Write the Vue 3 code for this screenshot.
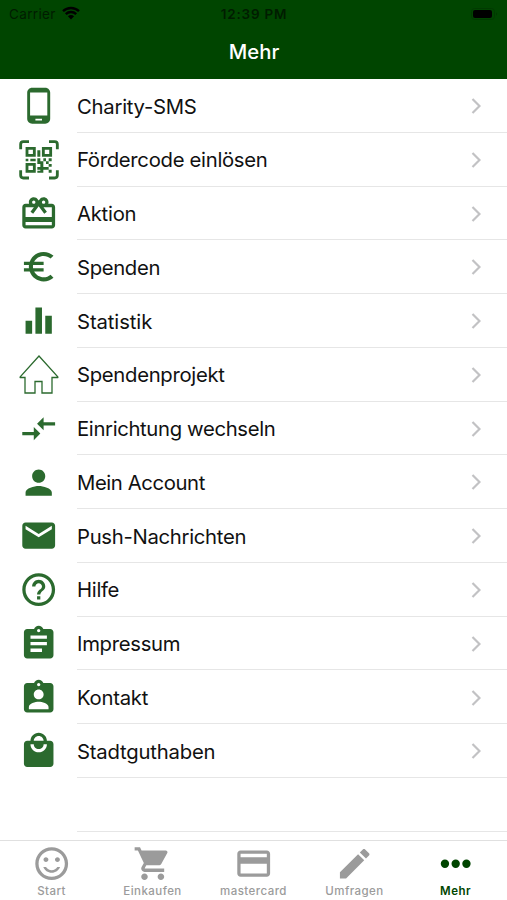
<template>
  <div class="more-screen">
    <!-- Status bar and title -->
    <header class="top-bar">
      <div class="status-bar">
        <div class="carrier">
          <span>Carrier</span>
          <svg class="wifi" viewBox="0 0 18 14">
            <path d="M1 5.2a11.5 11.5 0 0 1 16 0M3.8 8.2a7.4 7.4 0 0 1 10.4 0" />
            <path class="wifi-dot" d="M5.9 10.3a4.6 4.6 0 0 1 6.2 0L9 13.6z" />
          </svg>
        </div>
        <span class="clock">12:39 PM</span>
        <div class="battery-slot">
          <svg class="battery" viewBox="0 0 28 12">
            <rect class="battery-case" x=".5" y=".5" width="23" height="11" rx="3" />
            <rect x="2" y="2" width="19" height="8" rx="2" />
            <path class="battery-tip" d="M25 4.2v3.6c1.6-.6 1.6-3 0-3.6z" />
          </svg>
        </div>
      </div>
      <h1>Mehr</h1>
    </header>

    <!-- Menu entries -->
    <main class="menu">
      <button v-for="item in menuItems" :key="item.label" class="menu-row">
        <span class="menu-icon">
          <svg v-if="item.icon === 'qr'" class="qr" viewBox="0 0 120 120">
            <g class="qr-lines">
              <path d="M5 28V13q0-8 8-8h17M90 5h17q8 0 8 8v15M5 91v15q0 8 8 8h17M90 114h17q8 0 8-8V91" />
              <path d="M24 25h22v21H24zM73 25h22v21H73zM24 73h22v21H24z" />
            </g>
            <path
              d="M55 31h9v19h-9zM20 56h8v8h-8zM34 56h16v8H34zM55 55h9v9h9v8H55zM73 55h8v9h-8zM89 55h9v9h-9zM81 64h8v8h-8zM89 72h9v8h-9zM64 72h9v9h8v8h-8v9h-9v-9h-9v-8h9zM81 81h8v8h-8zM89 89h9v9h-9zM55 92h9v6h-9z"
            />
          </svg>
          <svg v-else-if="item.icon === 'house'" class="house" viewBox="0 0 40 40">
            <path d="M20 1L1.2 21.8q-.4.7.4.7H6V38h10V26.5h7V38h10V22.5h5.4q.8 0 .4-.7z" />
          </svg>
          <svg v-else viewBox="0 0 24 24">
            <path :d="icons[item.icon]" />
          </svg>
        </span>
        <span class="menu-body">
          <span class="menu-label" :style="{ letterSpacing: item.spacing + 'px' }">{{ item.label }}</span>
          <svg class="chevron" viewBox="0 0 10 16">
            <path d="M1.5 1l7 7-7 7" />
          </svg>
        </span>
      </button>
      <div class="menu-row">
        <span class="menu-icon"></span>
        <span class="menu-body"></span>
      </div>
    </main>

    <!-- Tab bar -->
    <nav class="tab-bar">
      <button
        v-for="tab in tabs"
        :key="tab.label"
        :class="['tab', { 'is-active': tab.label === activeTab }]"
        @click="activeTab = tab.label"
      >
        <svg viewBox="0 0 24 24">
          <path :d="icons[tab.icon]" />
        </svg>
        <span>{{ tab.label }}</span>
      </button>
    </nav>
  </div>
</template>

<script setup>
import { ref } from 'vue'

const activeTab = ref('Mehr')

const menuItems = [
  { label: 'Charity-SMS', icon: 'phone', spacing: -0.25 },
  { label: 'Fördercode einlösen', icon: 'qr', spacing: -0.3 },
  { label: 'Aktion', icon: 'gift', spacing: -0.25 },
  { label: 'Spenden', icon: 'euro', spacing: -0.35 },
  { label: 'Statistik', icon: 'chart', spacing: -0.1 },
  { label: 'Spendenprojekt', icon: 'house', spacing: -0.3 },
  { label: 'Einrichtung wechseln', icon: 'arrows', spacing: -0.35 },
  { label: 'Mein Account', icon: 'person', spacing: -0.4 },
  { label: 'Push-Nachrichten', icon: 'mail', spacing: -0.3 },
  { label: 'Hilfe', icon: 'help', spacing: -0.3 },
  { label: 'Impressum', icon: 'clipboard', spacing: -0.3 },
  { label: 'Kontakt', icon: 'contact', spacing: -0.25 },
  { label: 'Stadtguthaben', icon: 'bag', spacing: -0.2 }
]

const tabs = [
  { label: 'Start', icon: 'smile' },
  { label: 'Einkaufen', icon: 'cart' },
  { label: 'mastercard', icon: 'card' },
  { label: 'Umfragen', icon: 'pencil' },
  { label: 'Mehr', icon: 'dots' }
]

// 24x24 icon shapes
const icons = {
  phone: 'M16 1H8C6.34 1 5 2.34 5 4v16c0 1.66 1.34 3 3 3h8c1.66 0 3-1.34 3-3V4c0-1.66-1.34-3-3-3zm-2 20h-4v-1h4v1zm3.25-3H6.75V4h10.5v14z',
  gift: 'M20 6h-2.18c.11-.31.18-.65.18-1 0-1.66-1.34-3-3-3-1.05 0-1.96.54-2.5 1.35l-.5.67-.5-.68C10.96 2.54 10.05 2 9 2 7.34 2 6 3.34 6 5c0 .35.07.69.18 1H4c-1.11 0-1.99.89-1.99 2L2 19c0 1.11.89 2 2 2h16c1.11 0 2-.89 2-2V8c0-1.11-.89-2-2-2zm-5-2c.55 0 1 .45 1 1s-.45 1-1 1-1-.45-1-1 .45-1 1-1zM9 4c.55 0 1 .45 1 1s-.45 1-1 1-1-.45-1-1 .45-1 1-1zm11 15H4v-2h16v2zm0-5H4V8h5.08L7 10.83 8.62 12 11 8.76l1-1.36 1 1.36L15.38 12 17 10.83 14.92 8H20v6z',
  euro: 'M15 18.5c-2.51 0-4.68-1.42-5.76-3.5H15v-2H8.58c-.05-.33-.08-.66-.08-1s.03-.67.08-1H15V9H9.24C10.32 6.92 12.5 5.5 15 5.5c1.61 0 3.09.59 4.23 1.57L21 5.3C19.41 3.87 17.3 3 15 3c-3.92 0-7.24 2.51-8.48 6H3v2h3.06c-.04.33-.06.66-.06 1s.02.67.06 1H3v2h3.52c1.24 3.49 4.56 6 8.48 6 2.31 0 4.41-.87 6-2.3l-1.78-1.77c-1.13.98-2.6 1.57-4.22 1.57z',
  chart: 'M10 20h4V4h-4v16zm-6 0h4v-8H4v8zM16 9v11h4V9h-4z',
  arrows: 'M9.01 14H2v2h7.01v3L13 15l-3.99-4v3zm5.98-1v-3H22V8h-7.01V5L11 9l3.99 4z',
  person: 'M12 12c2.21 0 4-1.79 4-4s-1.79-4-4-4-4 1.79-4 4 1.79 4 4 4zm0 2c-2.67 0-8 1.34-8 4v2h16v-2c0-2.66-5.33-4-8-4z',
  mail: 'M20 4H4c-1.1 0-1.99.9-1.99 2L2 18c0 1.1.9 2 2 2h16c1.1 0 2-.9 2-2V6c0-1.1-.9-2-2-2zm0 4l-8 5-8-5V6l8 5 8-5v2z',
  help: 'M11 18h2v-2h-2v2zm1-16C6.48 2 2 6.48 2 12s4.48 10 10 10 10-4.48 10-10S17.52 2 12 2zm0 18c-4.41 0-8-3.59-8-8s3.59-8 8-8 8 3.59 8 8-3.59 8-8 8zm0-14c-2.21 0-4 1.79-4 4h2c0-1.1.9-2 2-2s2 .9 2 2c0 2-3 1.75-3 5h2c0-2.25 3-2.5 3-5 0-2.21-1.79-4-4-4z',
  clipboard: 'M19 3h-4.18C14.4 1.84 13.3 1 12 1c-1.3 0-2.4.84-2.82 2H5c-1.1 0-2 .9-2 2v14c0 1.1.9 2 2 2h14c1.1 0 2-.9 2-2V5c0-1.1-.9-2-2-2zm-7 0c.55 0 1 .45 1 1s-.45 1-1 1-1-.45-1-1 .45-1 1-1zm2 14H7v-2h7v2zm3-4H7v-2h10v2zm0-4H7V7h10v2z',
  contact: 'M19 3h-4.18C14.4 1.84 13.3 1 12 1c-1.3 0-2.4.84-2.82 2H5c-1.1 0-2 .9-2 2v14c0 1.1.9 2 2 2h14c1.1 0 2-.9 2-2V5c0-1.1-.9-2-2-2zm-7 0c.55 0 1 .45 1 1s-.45 1-1 1-1-.45-1-1 .45-1 1-1zm0 4c1.66 0 3 1.34 3 3s-1.34 3-3 3-3-1.34-3-3 1.34-3 3-3zm6 12H6v-1.4c0-2 4-3.1 6-3.1s6 1.1 6 3.1V19z',
  bag: 'M19 6h-2c0-2.76-2.24-5-5-5S7 3.24 7 6H5c-1.1 0-1.99.9-1.99 2L3 20c0 1.1.9 2 2 2h14c1.1 0 2-.9 2-2V8c0-1.1-.9-2-2-2zm-7-3c1.66 0 3 1.34 3 3H9c0-1.66 1.34-3 3-3zm0 10c-2.76 0-5-2.24-5-5h2c0 1.66 1.34 3 3 3s3-1.34 3-3h2c0 2.76-2.24 5-5 5z',
  smile: 'M11.99 2C6.47 2 2 6.48 2 12s4.47 10 9.99 10C17.52 22 22 17.52 22 12S17.52 2 11.99 2zM12 20c-4.42 0-8-3.58-8-8s3.58-8 8-8 8 3.58 8 8-3.58 8-8 8zM15.5 11c.83 0 1.5-.67 1.5-1.5S16.33 8 15.5 8 14 8.67 14 9.5s.67 1.5 1.5 1.5zM8.5 11c.83 0 1.5-.67 1.5-1.5S9.33 8 8.5 8 7 8.67 7 9.5 7.67 11 8.5 11zM12 16c-1.48 0-2.75-.81-3.45-2H6.88c.8 2.05 2.79 3.5 5.12 3.5s4.32-1.45 5.12-3.5h-1.67c-.7 1.19-1.97 2-3.45 2z',
  cart: 'M7 18c-1.1 0-1.99.9-1.99 2S5.9 22 7 22s2-.9 2-2-.9-2-2-2zM1 2v2h2l3.6 7.59-1.35 2.45c-.16.28-.25.61-.25.96 0 1.1.9 2 2 2h12v-2H7.42c-.14 0-.25-.11-.25-.25l.03-.12.9-1.63h7.45c.75 0 1.41-.41 1.75-1.03l3.58-6.49c.08-.14.12-.31.12-.48 0-.55-.45-1-1-1H5.21l-.94-2H1zm16 16c-1.1 0-1.99.9-1.99 2s.89 2 1.99 2 2-.9 2-2-.9-2-2-2z',
  card: 'M20 4H4c-1.11 0-1.99.89-1.99 2L2 18c0 1.11.89 2 2 2h16c1.11 0 2-.89 2-2V6c0-1.11-.89-2-2-2zm0 14H4v-6h16v6zm0-10H4V6h16v2z',
  pencil: 'M3 17.25V21h3.75L17.81 9.94l-3.75-3.75L3 17.25zM20.71 7.04c.39-.39.39-1.02 0-1.41l-2.34-2.34c-.39-.39-1.02-.39-1.41 0l-1.83 1.83 3.75 3.75 1.83-1.83z',
  dots: 'M2.9 12a2.55 2.55 0 1 0 5.1 0a2.55 2.55 0 1 0-5.1 0zM9.45 12a2.55 2.55 0 1 0 5.1 0a2.55 2.55 0 1 0-5.1 0zM16 12a2.55 2.55 0 1 0 5.1 0a2.55 2.55 0 1 0-5.1 0z'
}
</script>

<style>
html,
body {
  margin: 0;
  background: #fff;
}
</style>

<style scoped>
.more-screen {
  display: flex;
  flex-direction: column;
  width: 100%;
  height: 900px;
  overflow: hidden;
  background: #fff;
  color: #111;
  font-family: Inter, "Liberation Sans", sans-serif;
}

button {
  background: none;
  border: none;
  padding: 0;
  color: inherit;
  font: inherit;
  text-align: left;
  cursor: pointer;
}

/* Top bar */
.top-bar {
  flex: none;
  box-sizing: border-box;
  height: 79px;
  background: #004500;
}

.status-bar {
  display: grid;
  grid-template-columns: 1fr auto 1fr;
  align-items: center;
  height: 27px;
  padding: 0 8px 0 9px;
  color: #001c00;
  font-size: 13.5px;
}

.carrier {
  display: flex;
  align-items: center;
  gap: 6px;
  letter-spacing: 0.35px;
}

.wifi {
  width: 18px;
  height: 14px;
  margin-top: -2px;
  fill: none;
  stroke: #000;
  stroke-width: 2.4;
}

.wifi-dot {
  fill: #000;
  stroke: none;
}

.clock {
  font-weight: 600;
  letter-spacing: 0.8px;
}

.battery-slot {
  display: flex;
  justify-content: flex-end;
}

.battery {
  width: 28px;
  height: 12px;
}

.battery-case {
  fill: none;
  stroke: #003a00;
}

.battery-tip {
  fill: #003a00;
}

h1 {
  margin: 0;
  color: #fff;
  font-size: 20.3px;
  font-weight: 550;
  line-height: 50px;
  text-indent: 1px;
  text-align: center;
}

/* Menu */
.menu {
  flex: 1;
  min-height: 0;
}

.menu-row {
  display: flex;
  width: 100%;
  height: 53.77px;
}

.menu-icon {
  display: flex;
  flex: none;
  align-items: center;
  justify-content: center;
  width: 77px;
}

.menu-icon svg {
  width: 39.4px;
  height: 39.4px;
  fill: #2b6a2e;
}

.menu-icon .qr {
  width: 40px;
  height: 40px;
}

.qr-lines {
  fill: none;
  stroke: #2b6a2e;
  stroke-width: 8.5;
}

.menu-icon .house {
  width: 40px;
  height: 40px;
  fill: none;
  stroke: #2b6a2e;
  stroke-width: 1.3;
}

.menu-body {
  display: flex;
  flex: 1;
  align-items: center;
  justify-content: space-between;
  box-sizing: border-box;
  padding-right: 26.5px;
  border-bottom: 1px solid #e6e6e6;
}

.menu-label {
  padding-top: 2.4px;
  font-size: 20.3px;
  line-height: 26px;
  white-space: nowrap;
}

.chevron {
  width: 10px;
  height: 16px;
  margin-top: 1.5px;
  fill: none;
  stroke: #c2c2c4;
  stroke-width: 2.2;
}

/* Tab bar */
.tab-bar {
  display: grid;
  flex: none;
  grid-template-columns: repeat(5, 1fr);
  box-sizing: border-box;
  height: 60px;
  padding: 0 1px;
  border-top: 1px solid #e0e0e0;
}

.tab {
  display: flex;
  flex-direction: column;
  align-items: center;
  padding-top: 3px;
  color: #9b9b9b;
  font-size: 11.5px;
  font-weight: 500;
  letter-spacing: 0.45px;
  line-height: 16px;
}

.tab svg {
  width: 39.4px;
  height: 39.4px;
  fill: currentColor;
}

.tab.is-active {
  color: #004500;
  font-weight: 600;
}
</style>
